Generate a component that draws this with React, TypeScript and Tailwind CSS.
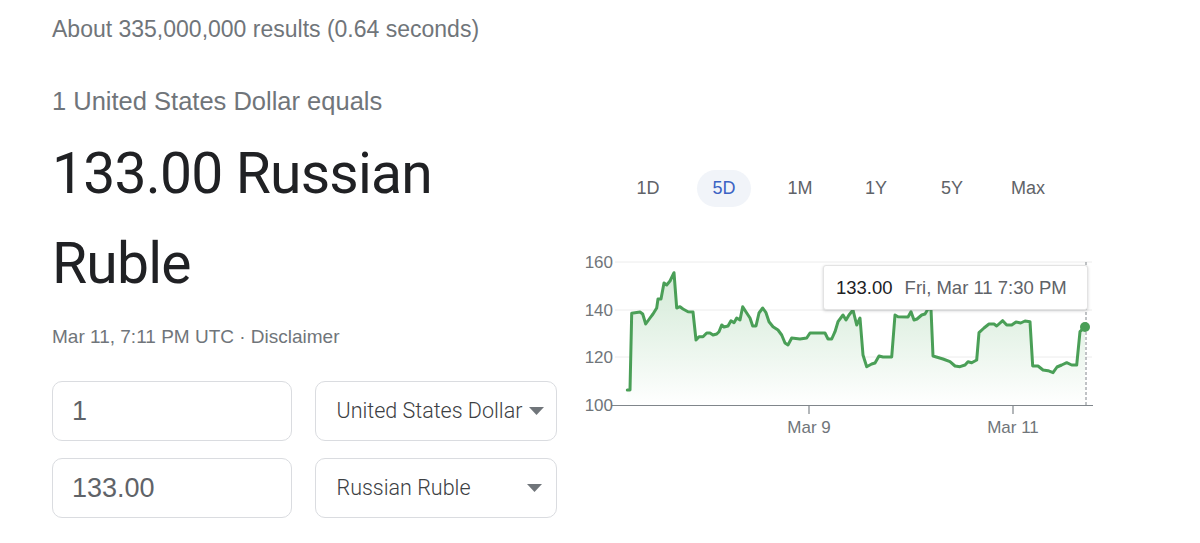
import React from "react";

const pts: [number, number][] = [
  [627.3, 390], [630, 390], [631.7, 313.3], [640, 312], [642.7, 314], [645.7, 324], [650, 318], [653, 314], [656.7, 308],
  [658, 299], [661, 299], [664, 283], [666.7, 285], [670, 281], [674, 272.7], [676.7, 308], [680, 306.7],
  [683, 309], [688, 311.7], [693, 312], [696, 340], [699, 336.7], [703, 336.7], [706.7, 333], [710, 333],
  [713, 335], [716.7, 334], [719, 331.7], [721.7, 325], [724, 327], [728, 326], [731, 320.7], [734, 322.7],
  [736.7, 318], [740, 320], [742.7, 306.7], [746.7, 313], [750, 318], [752.7, 326], [756, 326], [759, 313],
  [762.7, 308], [766, 312.7], [769, 321.7], [773, 326.7], [778, 330], [781.7, 335], [785, 343], [788, 345],
  [791.7, 338], [800, 339], [806.7, 338], [810, 333], [825, 333], [828, 339], [831.7, 339], [835, 331.7],
  [838, 321.7], [843, 315], [846, 320], [849, 315], [853, 310], [856.7, 325], [860, 318], [863, 355],
  [866.7, 366.7], [871.7, 364], [875, 363], [879, 356], [883, 357], [891.7, 357], [895, 315], [898, 316.7],
  [908, 317], [911, 311.7], [914, 320], [917, 319], [921.7, 315], [925, 314], [928, 309], [931, 309],
  [933, 356], [943, 359], [950, 361.7], [955, 366], [960, 366.7], [965, 365], [968, 361.7], [971.7, 362.7],
  [976.7, 360], [979, 332.7], [984, 328], [989, 324], [994, 324], [996.7, 326], [1002.7, 320.7],
  [1006.7, 325], [1011.7, 325], [1016, 322], [1020.7, 323], [1025, 321], [1030, 321.7], [1032.7, 366],
  [1038, 366], [1043, 370], [1048, 370.7], [1053, 372.7], [1057, 367], [1061.7, 365], [1066.7, 362.7],
  [1071.7, 365], [1076.7, 365], [1080, 331.7], [1085, 327],
];

const linePath = pts.map((p, i) => `${i === 0 ? "M" : "L"}${p[0]} ${p[1]}`).join(" ");
const areaPath = `${linePath} L1085 405 L627.3 405 Z`;

const arial = { fontFamily: '"Liberation Sans", Arial, sans-serif' };
const roboto = { fontFamily: 'Roboto, "Liberation Sans", sans-serif' };

function Caret() {
  return (
    <svg width="15" height="8" viewBox="0 0 15 8" className="shrink-0">
      <path d="M0 0 L15 0 L7.5 8 Z" fill="#70757a" />
    </svg>
  );
}

export default function App() {
  const tabs = ["1D", "5D", "1M", "1Y", "5Y", "Max"];
  return (
    <div className="w-[1200px] h-[543px] bg-white overflow-hidden px-[52px]" style={arial}>
      <div className="pt-[15px] h-[43px] text-[23px] leading-[28px] text-[#70757a]">
        About 335,000,000 results (0.64 seconds)
      </div>
      <div className="flex">
        <div className="w-[505px] shrink-0">
          <div className="mt-[43px] text-[25.5px] leading-[30px] text-[#70757a]">
            1 United States Dollar equals
          </div>
          <div className="mt-[13px] text-[57px] leading-[90px] tracking-[-0.8px] text-[#202124]" style={roboto}>
            133.00 Russian Ruble
          </div>
          <div className="mt-[16px] text-[19px] leading-[24px] text-[#70757a]">
            Mar 11, 7:11 PM UTC · Disclaimer
          </div>
          <div className="mt-[32px] flex flex-col gap-[17px]">
            <div className="flex gap-[23px]">
              <div className="w-[241px] h-[60px] border border-[#dadce0] rounded-[10px] flex items-center pl-[19px] text-[27px] text-[#5f6368]">
                1
              </div>
              <div className="w-[242px] h-[60px] border border-[#dadce0] rounded-[10px] flex items-center pl-[20px] pr-[12px] gap-[3px]">
                <span className="flex-1 whitespace-nowrap text-[21.5px] font-light text-[#3c4043]" style={roboto}>
                  United States Dollar
                </span>
                <Caret />
              </div>
            </div>
            <div className="flex gap-[23px]">
              <div className="w-[241px] h-[60px] border border-[#dadce0] rounded-[10px] flex items-center pl-[19px] text-[27px] text-[#5f6368]">
                133.00
              </div>
              <div className="w-[242px] h-[60px] border border-[#dadce0] rounded-[10px] flex items-center pl-[20px] pr-[14px] gap-[2px]">
                <span className="flex-1 whitespace-nowrap text-[21.5px] font-light text-[#3c4043]" style={roboto}>
                  Russian Ruble
                </span>
                <Caret />
              </div>
            </div>
          </div>
        </div>
        <div className="ml-[13px] w-[540px] shrink-0">
          <div className="mt-[127px] pl-[51px] flex gap-[22px]">
            {tabs.map((t) => (
              <div
                key={t}
                className={
                  t === "5D"
                    ? "w-[54px] h-[37px] rounded-full bg-[#f1f4f9] flex items-center justify-center text-[18px] text-[#3b63c4]"
                    : "w-[54px] h-[37px] rounded-full flex items-center justify-center text-[18px] text-[#5f6368]"
                }
              >
                {t}
              </div>
            ))}
          </div>
          <div className="relative mt-[43px] w-[540px] h-[190px]">
            <svg width="540" height="190" viewBox="570 250 540 190" className="block">
              <defs>
                <linearGradient id="g" x1="0" y1="0" x2="0" y2="1">
                  <stop offset="0" stopColor="#cfe8d3" stopOpacity="0.9" />
                  <stop offset="1" stopColor="#ffffff" stopOpacity="1" />
                </linearGradient>
              </defs>
              <line x1="615" y1="262" x2="1092" y2="262" stroke="#ececec" strokeWidth="1" />
              <line x1="615" y1="310" x2="1092" y2="310" stroke="#ececec" strokeWidth="1" />
              <line x1="615" y1="357" x2="1092" y2="357" stroke="#ececec" strokeWidth="1" />
              <path d={areaPath} fill="url(#g)" />
              <line x1="612" y1="405.5" x2="1093" y2="405.5" stroke="#80868b" strokeWidth="1.2" />
              <line x1="809" y1="405" x2="809" y2="414" stroke="#80868b" strokeWidth="1.2" />
              <line x1="1013" y1="405" x2="1013" y2="414" stroke="#80868b" strokeWidth="1.2" />
              <line x1="1086" y1="262" x2="1086" y2="405" stroke="#80868b" strokeWidth="1" strokeDasharray="3 2" />
              <path d={linePath} fill="none" stroke="#4a9f57" strokeWidth="3" strokeLinejoin="round" strokeLinecap="round" />
              <circle cx="1085" cy="327" r="5" fill="#4a9f57" />
              <g fill="#70757a" fontSize="17" style={arial}>
                <text x="613" y="268" textAnchor="end">160</text>
                <text x="613" y="316" textAnchor="end">140</text>
                <text x="613" y="363" textAnchor="end">120</text>
                <text x="613" y="411" textAnchor="end">100</text>
                <text x="809" y="433" textAnchor="middle">Mar 9</text>
                <text x="1013" y="433" textAnchor="middle">Mar 11</text>
              </g>
            </svg>
            <div className="absolute left-[253px] top-[15px] w-[265px] h-[45px] bg-white rounded-[3px] border border-[#e3e3e3] shadow-[0_1px_3px_rgba(60,64,67,0.25)] flex items-center pl-[12px] text-[18.5px] whitespace-nowrap">
              <span className="text-[#202124]">133.00</span>
              <span className="ml-[12px] text-[#5f6368]">Fri, Mar 11 7:30 PM</span>
            </div>
          </div>
        </div>
      </div>
    </div>
  );
}
